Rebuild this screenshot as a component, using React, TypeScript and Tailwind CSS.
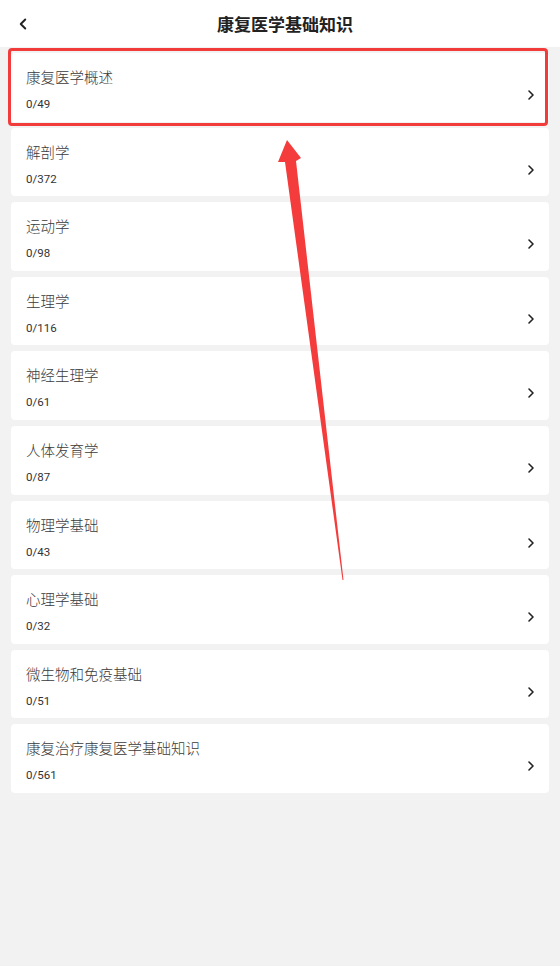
import { ChevronLeft, ChevronRight } from "lucide-react";

const items = [
  { title: "康复医学概述", count: "0/49" },
  { title: "解剖学", count: "0/372" },
  { title: "运动学", count: "0/98" },
  { title: "生理学", count: "0/116" },
  { title: "神经生理学", count: "0/61" },
  { title: "人体发育学", count: "0/87" },
  { title: "物理学基础", count: "0/43" },
  { title: "心理学基础", count: "0/32" },
  { title: "微生物和免疫基础", count: "0/51" },
  { title: "康复治疗康复医学基础知识", count: "0/561" },
];

export default function App() {
  return (
    <div
      className="relative w-[560px] h-[966px] bg-[#f2f2f2] overflow-hidden"
      style={{ fontFamily: '"Noto Sans CJK SC", Roboto, sans-serif' }}
    >
      <header className="h-[47px] bg-white flex items-center relative">
        <ChevronLeft className="absolute left-[14px] size-[18px] text-[#222]" strokeWidth={2.6} />
        <h1 className="w-full pl-[10px] text-center text-[17px] font-bold text-[#222] leading-none">
          康复医学基础知识
        </h1>
      </header>

      <ul className="flex flex-col gap-[6px] px-[11px] pt-[6px]">
        {items.map((item) => (
          <li
            key={item.title}
            className="h-[68.6px] bg-white rounded-[4px] flex items-start justify-between pl-[15px] pr-[10px] pt-[14px]"
          >
            <div className="flex flex-col">
              <span className="text-[14.5px] leading-[20px] text-[#3a3a3a] font-light">{item.title}</span>
              <span
                className="mt-[9px] text-[11.5px] leading-[16px] text-[#333]"
                style={{ fontFamily: "Roboto, sans-serif" }}
              >
                {item.count}
              </span>
            </div>
            <ChevronRight className="size-[16px] text-[#222] mt-[20px]" strokeWidth={2.4} />
          </li>
        ))}
      </ul>

      {/* annotation overlay */}
      <div className="absolute left-[8px] top-[48px] w-[540px] h-[78px] border-[3px] border-[#f23c3c] rounded-[4px]" />
      <svg className="absolute left-0 top-0" width="560" height="966" viewBox="0 0 560 966">
        <polygon
          points="287,140 301,158 296,161 343.5,580 342.5,580 285,162 278,162"
          fill="#f43c3c"
        />
      </svg>
    </div>
  );
}
